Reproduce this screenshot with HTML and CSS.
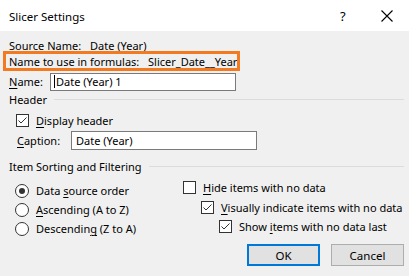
FILE: index.html
```html
<!DOCTYPE html>
<html>
<head>
<meta charset="utf-8">
<link rel="stylesheet" href="styles.css">
</head>
<body>
<div class="dialog">
  <div class="titlebar">
    <span class="title">Slicer Settings</span>
    <span class="help">?</span>
    <svg class="close" width="12" height="12" viewBox="0 0 12 12"><path d="M0.5 0.5 L11.5 11.5 M11.5 0.5 L0.5 11.5" stroke="#000" stroke-width="1.1" fill="none"/></svg>
  </div>
  <div class="content">
    <div class="row source"><span class="lbl-source">Source Name:</span><span>Date (Year)</span></div>
    <div class="row formulas"><span class="lbl-formula">Name to use in formulas:</span><span>Slicer_Date__Year</span></div>
    <div class="row namerow"><span class="lbl-name"><u>N</u>ame:</span><div class="input name-input"><span class="caret"></span>Date (Year) 1</div></div>
    <div class="section"><span>Header</span><span class="rule"></span></div>
    <div class="row check-row display">
      <span class="cb"><svg width="13" height="13" viewBox="0 0 13 13"><path d="M2.5 6.5 L5 9 L10.5 3.5" stroke="#333" stroke-width="1" fill="none"/></svg></span>
      <span><u>D</u>isplay header</span>
    </div>
    <div class="row caprow"><span class="lbl-cap"><u>C</u>aption:</span><div class="input cap-input">Date (Year)</div></div>
    <div class="section sort"><span>Item Sorting and Filtering</span><span class="rule"></span></div>
    <div class="options">
      <div class="radios">
        <div class="opt"><span class="radio on"></span><span>Data <u>s</u>ource order</span></div>
        <div class="opt"><span class="radio"></span><span><u>A</u>scending (A to Z)</span></div>
        <div class="opt"><span class="radio"></span><span>Descendin<u>g</u> (Z to A)</span></div>
      </div>
      <div class="checks">
        <div class="opt lvl0"><span class="cb"></span><span><u>H</u>ide items with no data</span></div>
        <div class="opt lvl1"><span class="cb"><svg width="13" height="13" viewBox="0 0 13 13"><path d="M2.5 6.5 L5 9 L10.5 3.5" stroke="#333" stroke-width="1" fill="none"/></svg></span><span><u>V</u>isually indicate items with no data</span></div>
        <div class="opt lvl2"><span class="cb"><svg width="13" height="13" viewBox="0 0 13 13"><path d="M2.5 6.5 L5 9 L10.5 3.5" stroke="#333" stroke-width="1" fill="none"/></svg></span><span>Show <u>i</u>tems with no data last</span></div>
      </div>
    </div>
    <div class="buttons">
      <button class="btn ok">OK</button>
      <button class="btn">Cancel</button>
    </div>
  </div>
</div>
</body>
</html>
```
FILE: styles.css
```css
* { box-sizing: border-box; }
html, body { margin: 0; padding: 0; background: #fff; }
body { font-family: "Noto Sans", "Open Sans", sans-serif; font-size: 11px; color: #000; }
span, div { white-space: nowrap; }
u { text-decoration: underline; text-underline-offset: 2px; text-decoration-thickness: 1px; }
.dialog { width: 409px; height: 276px; background: #f0f0f0; overflow: hidden; }
.titlebar { height: 31px; background: #fff; display: flex; align-items: center; padding-left: 9px; }
.title { font-size: 11.5px; flex: 1; padding-top: 1px; }
.help { width: 12px; margin-right: 29px; font-size: 13px; }
.close { margin-right: 16px; }
.content { padding: 7px 0 0 0; }
.row { display: flex; align-items: center; }
.row > *, .opt > *, .section > * { flex-shrink: 0; }
.source { height: 14px; padding-left: 9px; }
.lbl-source { width: 81px; }
.formulas { height: 14px; margin-top: 2px; margin-left: 6px; width: 231px; padding-left: 3px; outline: 3px solid #f47a20; }
.lbl-formula { width: 139px; }
.namerow { height: 19px; margin-top: 4px; padding-left: 9px; }
.lbl-name { width: 41px; }
.input { background: #fff; border: 1px solid #7a7a7a; display: flex; align-items: center; padding-left: 3px; }
.name-input { width: 186px; height: 18px; }
.caret { width: 1px; height: 13px; background: #000; margin-right: 1px; }
.section { display: flex; align-items: center; height: 17px; padding-left: 9px; padding-right: 5px; }
.section .rule { flex: 1 1 auto; flex-shrink: 1; height: 1px; background: #dcdcdc; margin-left: 7px; }
.display { height: 16px; margin-top: 4px; padding-left: 16px; }
.cb { width: 13px; height: 13px; border: 1px solid #333; background: #fff; display: inline-flex; margin-right: 7px; position: relative; }
.cb svg { position: absolute; left: -1px; top: -1px; }
.caprow { height: 19px; margin-top: 3px; padding-left: 17px; }
.lbl-cap { width: 54px; }
.cap-input { width: 186px; height: 19px; padding-left: 4px; }
.sort { margin-top: 8px; height: 16px; }
.options { display: flex; height: 70px; }
.radios { width: 167px; padding-left: 15px; padding-top: 7px; flex-shrink: 0; }
.opt { display: flex; align-items: center; height: 19px; }
.radio { width: 14px; height: 14px; border-radius: 50%; border: 1px solid #333; background: #fff; margin-right: 7px; display: inline-flex; align-items: center; justify-content: center; }
.radio.on::after { content: ""; width: 6px; height: 6px; border-radius: 50%; background: #333; }
.checks { padding-top: 4px; padding-left: 16px; }
.lvl1 { padding-left: 18px; margin-top: 1px; }
.lvl2 { padding-left: 36px; }
.buttons { display: flex; justify-content: flex-end; gap: 11px; padding-right: 5px; }
.btn { width: 73px; height: 22px; background: #e1e1e1; border: 1px solid #adadad; font-family: inherit; font-size: 11.5px; color: #000; padding: 0; }
.btn.ok { border: 2px solid #0078d7; }
```
